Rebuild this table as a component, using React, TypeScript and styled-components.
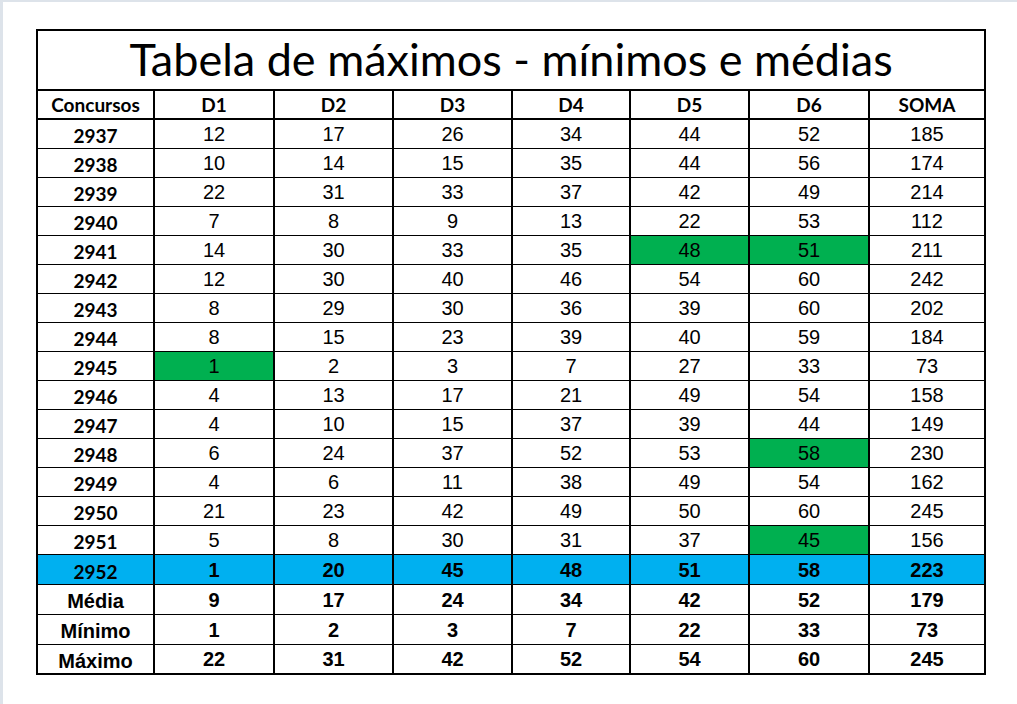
import React from "react";
import styled, { createGlobalStyle } from "styled-components";

const Global = createGlobalStyle`
  html, body { margin: 0; padding: 0; background: #ffffff; }
  * { box-sizing: border-box; }
`;

const Frame = styled.div`
  width: 1017px;
  height: 704px;
  background: #ffffff;
  border-top: 2px solid #dde3ea;
  border-left: 3px solid #dde3ea;
  padding: 27px 0 0 33px;
`;

const Table = styled.table`
  border-collapse: collapse;
  table-layout: fixed;
  width: 948px;
  border: 2px solid #000;
  color: #000;
`;

const TitleCell = styled.th`
  height: 60px;
  border-bottom: 2px solid #000;
  font-family: Lato, "Open Sans", sans-serif;
  font-weight: 400;
  font-size: 45px;
  text-align: center;
  vertical-align: middle;
  padding: 0 0 2px 0;
`;

const HeadCell = styled.th`
  height: 29px;
  border-left: 2px solid #000;
  border-bottom: 2px solid #000;
  font-family: Lato, "Open Sans", sans-serif;
  font-weight: 700;
  font-size: 19px;
  text-align: center;
  padding: 0;
`;

const Row = styled.tr<{ $h: number; $bg?: string }>`
  height: ${(p) => p.$h}px;
  background: ${(p) => p.$bg ?? "transparent"};
`;

const LabelCell = styled.td<{ $arial?: boolean }>`
  border-left: 2px solid #000;
  border-top: 1px solid #000;
  font-family: ${(p) => (p.$arial ? '"Liberation Sans", Arial, sans-serif' : 'Lato, "Open Sans", sans-serif')};
  font-weight: 700;
  font-size: ${(p) => (p.$arial ? 20 : 19)}px;
  line-height: 1;
  text-align: center;
  padding: 4px 0 0 0;
`;

const NumCell = styled.td<{ $bold?: boolean; $green?: boolean }>`
  border-left: 2px solid #000;
  border-top: 1px solid #000;
  background: ${(p) => (p.$green ? "#00b050" : "transparent")};
  font-family: "Liberation Sans", Arial, sans-serif;
  font-weight: ${(p) => (p.$bold ? 700 : 400)};
  font-size: 20px;
  line-height: 1;
  text-align: center;
  padding: 1px 0 0 0;
`;

const widths = [117, 120, 119, 119, 118, 119, 120, 116];
const headers = ["Concursos", "D1", "D2", "D3", "D4", "D5", "D6", "SOMA"];

const data: number[][] = [
  [2937, 12, 17, 26, 34, 44, 52, 185],
  [2938, 10, 14, 15, 35, 44, 56, 174],
  [2939, 22, 31, 33, 37, 42, 49, 214],
  [2940, 7, 8, 9, 13, 22, 53, 112],
  [2941, 14, 30, 33, 35, 48, 51, 211],
  [2942, 12, 30, 40, 46, 54, 60, 242],
  [2943, 8, 29, 30, 36, 39, 60, 202],
  [2944, 8, 15, 23, 39, 40, 59, 184],
  [2945, 1, 2, 3, 7, 27, 33, 73],
  [2946, 4, 13, 17, 21, 49, 54, 158],
  [2947, 4, 10, 15, 37, 39, 44, 149],
  [2948, 6, 24, 37, 52, 53, 58, 230],
  [2949, 4, 6, 11, 38, 49, 54, 162],
  [2950, 21, 23, 42, 49, 50, 60, 245],
  [2951, 5, 8, 30, 31, 37, 45, 156],
];

const greens: Record<number, number[]> = {
  2941: [5, 6],
  2945: [1],
  2948: [6],
  2951: [6],
};

const current = [2952, 1, 20, 45, 48, 51, 58, 223];

const summary: [string, number[]][] = [
  ["Média", [9, 17, 24, 34, 42, 52, 179]],
  ["Mínimo", [1, 2, 3, 7, 22, 33, 73]],
  ["Máximo", [22, 31, 42, 52, 54, 60, 245]],
];

export default function App() {
  return (
    <>
      <Global />
      <Frame>
        <Table>
          <colgroup>
            {widths.map((w, i) => (
              <col key={i} style={{ width: w }} />
            ))}
          </colgroup>
          <thead>
            <tr>
              <TitleCell colSpan={8}>Tabela de máximos - mínimos e médias</TitleCell>
            </tr>
            <tr>
              {headers.map((h) => (
                <HeadCell key={h}>{h}</HeadCell>
              ))}
            </tr>
          </thead>
          <tbody>
            {data.map((r) => (
              <Row key={r[0]} $h={29}>
                <LabelCell>{r[0]}</LabelCell>
                {r.slice(1).map((v, i) => (
                  <NumCell key={i} $green={(greens[r[0]] ?? []).includes(i + 1)}>
                    {v}
                  </NumCell>
                ))}
              </Row>
            ))}
            <Row $h={30} $bg="#00b0f0">
              <LabelCell>{current[0]}</LabelCell>
              {current.slice(1).map((v, i) => (
                <NumCell key={i} $bold>
                  {v}
                </NumCell>
              ))}
            </Row>
            {summary.map(([label, vals]) => (
              <Row key={label} $h={30}>
                <LabelCell $arial>{label}</LabelCell>
                {vals.map((v, i) => (
                  <NumCell key={i} $bold>
                    {v}
                  </NumCell>
                ))}
              </Row>
            ))}
          </tbody>
        </Table>
      </Frame>
    </>
  );
}
